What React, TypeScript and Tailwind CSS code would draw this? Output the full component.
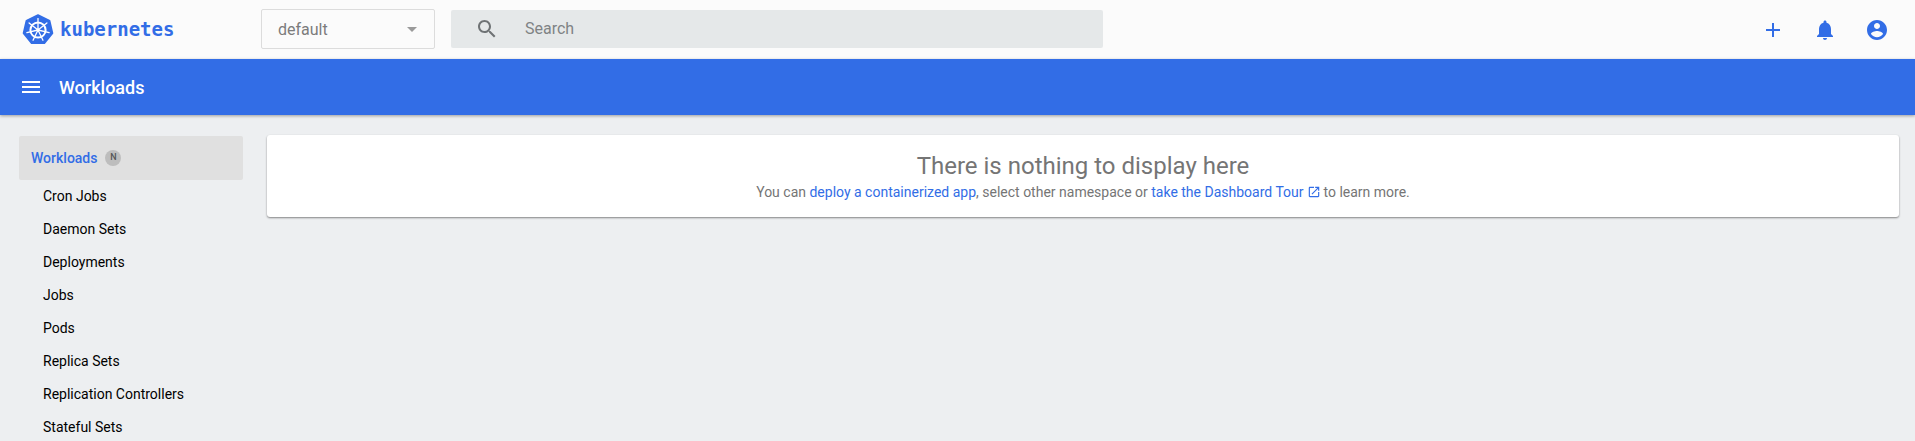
const navItems = [
  'Cron Jobs',
  'Daemon Sets',
  'Deployments',
  'Jobs',
  'Pods',
  'Replica Sets',
  'Replication Controllers',
  'Stateful Sets',
];

function Icon({ d, className }: { d: string; className: string }) {
  return (
    <svg viewBox="0 0 24 24" fill="currentColor" className={className}>
      <path d={d} />
    </svg>
  );
}

function Logo() {
  const spokes = [0, 51.4, 102.8, 154.3, 205.7, 257.1, 308.6];
  return (
    <svg viewBox="0 0 32 32" className="h-[32px] w-[32px] shrink-0">
      <path
        d="M16 1 L27.6 6.6 L30.5 19.2 L22.4 29.3 L9.6 29.3 L1.5 19.2 L4.4 6.6 Z"
        fill="#326de6"
        stroke="#326de6"
        strokeWidth="1.6"
        strokeLinejoin="round"
      />
      <circle cx="16" cy="16" r="7.6" fill="none" stroke="#fff" strokeWidth="2" />
      <circle cx="16" cy="16" r="1.7" fill="#fff" />
      {spokes.map((a) => (
        <g key={a} transform={`rotate(${a} 16 16)`}>
          <line x1="16" y1="16" x2="16" y2="4.6" stroke="#fff" strokeWidth="1.3" strokeLinecap="round" />
        </g>
      ))}
    </svg>
  );
}

export default function App() {
  return (
    <div className="flex h-[441px] flex-col overflow-hidden bg-[#edeff1] font-['Roboto',sans-serif]">
      {/* Top toolbar */}
      <header className="flex h-[59px] shrink-0 items-center bg-[#fbfbfb]">
        <div className="flex w-[261px] shrink-0 items-center gap-[6px] pl-[22px]">
          <Logo />
          <span className="font-['DejaVu_Sans_Mono',monospace] text-[19px] font-bold text-[#326de6]">kubernetes</span>
        </div>
        <div className="mb-px flex h-[40px] w-[174px] shrink-0 items-center justify-between rounded-[2px] border border-[#dcdcdc] pt-px pr-[17px] pl-[16px] text-[16px] text-[#7c7c7c]">
          default
          <span className="h-0 w-0 border-x-[5px] border-t-[5px] border-x-transparent border-t-[#9a9a9a]" />
        </div>
        <div className="mb-px ml-[16px] flex h-[38px] w-[652px] shrink-0 items-center rounded-[2px] bg-[#e5e8e9] pl-[24px] text-[16px] text-[#7f8385]">
          <Icon
            className="h-[24px] w-[24px] text-[#6f7375]"
            d="M15.5 14h-.79l-.28-.27C15.41 12.59 16 11.11 16 9.5 16 5.91 13.09 3 9.5 3S3 5.91 3 9.5 5.91 16 9.5 16c1.61 0 3.09-.59 4.23-1.57l.27.28v.79l5 4.99L20.49 19l-4.99-5zm-6 0C7.01 14 5 11.99 5 9.5S7.01 5 9.5 5 14 7.01 14 9.5 11.99 14 9.5 14z"
          />
          <span className="ml-[26px]">Search</span>
        </div>
        <div className="ml-auto flex items-center gap-[28px] pr-[26px] text-[#326de6]">
          <Icon className="h-[24px] w-[24px]" d="M19 13h-6v6h-2v-6H5v-2h6V5h2v6h6v2z" />
          <Icon
            className="h-[24px] w-[24px]"
            d="M12 22c1.1 0 2-.9 2-2h-4c0 1.1.89 2 2 2zm6-6v-5c0-3.07-1.64-5.64-4.5-6.32V4c0-.83-.67-1.5-1.5-1.5s-1.5.67-1.5 1.5v.68C7.63 5.36 6 7.92 6 11v5l-2 2v1h16v-1l-2-2z"
          />
          <Icon
            className="h-[24px] w-[24px]"
            d="M12 2C6.48 2 2 6.48 2 12s4.48 10 10 10 10-4.48 10-10S17.52 2 12 2zm0 3c1.66 0 3 1.34 3 3s-1.34 3-3 3-3-1.34-3-3 1.34-3 3-3zm0 14.2c-2.5 0-4.71-1.28-6-3.22.03-1.99 4-3.08 6-3.08 1.99 0 5.97 1.09 6 3.08-1.29 1.94-3.5 3.22-6 3.22z"
          />
        </div>
      </header>

      {/* Blue title bar */}
      <div className="z-10 flex h-[56px] shrink-0 items-center gap-[16px] bg-[#326de6] pl-[19px] text-white shadow-[0_1px_3px_rgba(0,0,0,0.35)]">
        <Icon className="h-[24px] w-[24px]" d="M3 18h18v-2H3v2zm0-5h18v-2H3v2zm0-7v2h18V6H3z" />
        <span className="text-[18px] font-medium">Workloads</span>
      </div>

      <div className="flex min-h-0 flex-1 pt-[20px]">
        {/* Sidebar */}
        <aside className="ml-[19px] w-[224px] shrink-0">
          <div className="mt-px flex h-[44px] items-center gap-[8px] rounded-[2px] bg-[#e0e0e0] pl-[12px] text-[14px] font-medium text-[#326de6]">
            Workloads
            <span className="flex h-[16px] w-[16px] items-center justify-center rounded-full bg-[#bdbdbd] text-[9px] font-medium text-[#555]">
              N
            </span>
          </div>
          <ul>
            {navItems.map((item) => (
              <li key={item} className="flex h-[33px] items-center pl-[24px] text-[14px] text-black">
                {item}
              </li>
            ))}
          </ul>
        </aside>

        {/* Empty state card */}
        <main className="mr-[16px] ml-[24px] flex-1">
          <div className="flex h-[82px] flex-col items-center rounded-[3px] bg-white pt-[17px] shadow-[0_1px_2px_rgba(0,0,0,0.45)]">
            <div className="text-[24px] leading-[28px] text-[#757575]">There is nothing to display here</div>
            <div className="mt-[2px] flex items-center text-[14px] leading-[20px] text-[#757575]">
              You can&nbsp;<a className="text-[#326de6]">deploy a containerized app</a>, select other namespace or&nbsp;
              <a className="text-[#326de6]">take the Dashboard Tour</a>
              <Icon
                className="mx-[3px] h-[14px] w-[14px] text-[#326de6]"
                d="M19 19H5V5h7V3H5c-1.11 0-2 .9-2 2v14c0 1.1.89 2 2 2h14c1.1 0 2-.9 2-2v-7h-2v7zM14 3v2h3.59l-9.83 9.83 1.41 1.41L19 6.41V10h2V3h-7z"
              />
              to learn more.
            </div>
          </div>
        </main>
      </div>
    </div>
  );
}
